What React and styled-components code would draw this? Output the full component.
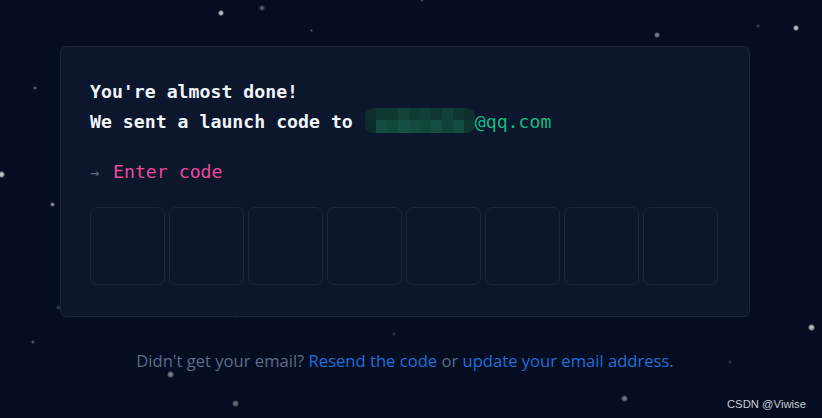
import React from "react";
import styled, { createGlobalStyle } from "styled-components";

const GlobalStyle = createGlobalStyle`
  html, body {
    margin: 0;
    padding: 0;
    background: #040d21;
  }
`;

const Page = styled.div`
  position: relative;
  width: 822px;
  height: 418px;
  overflow: hidden;
  background: #040d21;
  padding: 46px 0 0 60px;
  box-sizing: border-box;
`;

const Star = styled.span`
  position: absolute;
  border-radius: 50%;
  background: radial-gradient(circle, rgba(255,255,255,1) 0%, rgba(255,255,255,0.6) 45%, rgba(255,255,255,0) 75%);
`;

const Card = styled.div`
  position: relative;
  width: 690px;
  box-sizing: border-box;
  padding: 30px 30px 31px 29px;
  background: #0c172d;
  border: 1px solid #1c2538;
  border-radius: 6px;
  font-family: "DejaVu Sans Mono", "Liberation Mono", monospace;
  font-size: 18.2px;
  line-height: 30px;
`;

const Heading = styled.div`
  color: #f1f5f9;
  font-weight: bold;
`;

const Email = styled.span`
  font-weight: normal;
  color: #10b981;
`;

const Mosaic = styled.span`
  display: inline-grid;
  grid-template-columns: repeat(10, 11px);
  grid-template-rows: 12px 13px;
  vertical-align: top;
  margin: 1px 0 0 1px;
  border-radius: 8px;
  overflow: hidden;
`;

const Tile = styled.span`
  background: ${(p) => p.$c};
`;

const Prompt = styled.div`
  margin-top: 20px;
  color: #ec4899;
`;

const Arrow = styled.span`
  color: #5b6a86;
  font-size: 15px;
  display: inline-block;
  width: 23px;
`;

const CodeRow = styled.div`
  display: flex;
  gap: 4px;
  margin-top: 19px;
`;

const CodeBox = styled.input`
  width: 75px;
  height: 78px;
  box-sizing: border-box;
  padding: 0;
  border: 1px solid #1d2637;
  border-radius: 7px;
  background: #0c172d;
  outline: none;
  color: #f1f5f9;
  font: inherit;
  text-align: center;
`;

const Footer = styled.p`
  width: 690px;
  margin: 32px 0 0;
  text-align: center;
  font-family: "Open Sans", "Noto Sans", sans-serif;
  font-size: 16.6px;
  line-height: 24px;
  color: #5d6b88;
`;

const Link = styled.a`
  color: #1f6fd6;
  text-decoration: none;
`;

const Watermark = styled.div`
  position: absolute;
  right: 16px;
  bottom: 8px;
  font-family: "Liberation Sans", Arial, sans-serif;
  font-size: 11.3px;
  color: #c9ccd2;
`;

const stars = [
  [221, 13, 6, 0.9],
  [262, 8, 6, 0.4],
  [311, 30, 3, 0.3],
  [422, 0, 4, 0.3],
  [657, 35, 6, 0.55],
  [758, 26, 4, 0.25],
  [796, 28, 6, 0.9],
  [35, 88, 4, 0.4],
  [1, 174, 7, 0.9],
  [52, 204, 5, 0.6],
  [58, 307, 5, 0.2],
  [33, 342, 4, 0.35],
  [170, 374, 7, 0.55],
  [235, 403, 7, 0.45],
  [236, 316, 4, 0.2],
  [394, 334, 4, 0.2],
  [811, 327, 7, 0.85],
  [730, 362, 4, 0.2],
  [624, 398, 7, 0.5],
];

const mosaic = [
  "#0d2f2c", "#0f3a34", "#10392f", "#124238", "#0f3b35", "#113e36", "#0f3732", "#12403a", "#0e3631", "#0f2f2d",
  "#0c2c2a", "#134c40", "#12473b", "#155044", "#144b3f", "#13463a", "#144d41", "#124338", "#144b40", "#0f332e",
];

function App() {
  return (
    <>
      <GlobalStyle />
      <Page>
        {stars.map(([x, y, s, o], i) => (
          <Star
            key={i}
            style={{ left: x - s / 2, top: y - s / 2, width: s, height: s, opacity: o }}
          />
        ))}
        <Card>
          <Heading>You're almost done!</Heading>
          <Heading>
            We sent a launch code to{" "}
            <Mosaic>
              {mosaic.map((c, i) => (
                <Tile key={i} $c={c} />
              ))}
            </Mosaic>
            <Email>@qq.com</Email>
          </Heading>
          <Prompt>
            <Arrow>→</Arrow>Enter code
          </Prompt>
          <CodeRow>
            {Array.from({ length: 8 }).map((_, i) => (
              <CodeBox key={i} maxLength={1} />
            ))}
          </CodeRow>
        </Card>
        <Footer>
          Didn't get your email? <Link href="#">Resend the code</Link> or{" "}
          <Link href="#">update your email address</Link>.
        </Footer>
        <Watermark>CSDN @Viwise</Watermark>
      </Page>
    </>
  );
}

export default App;
